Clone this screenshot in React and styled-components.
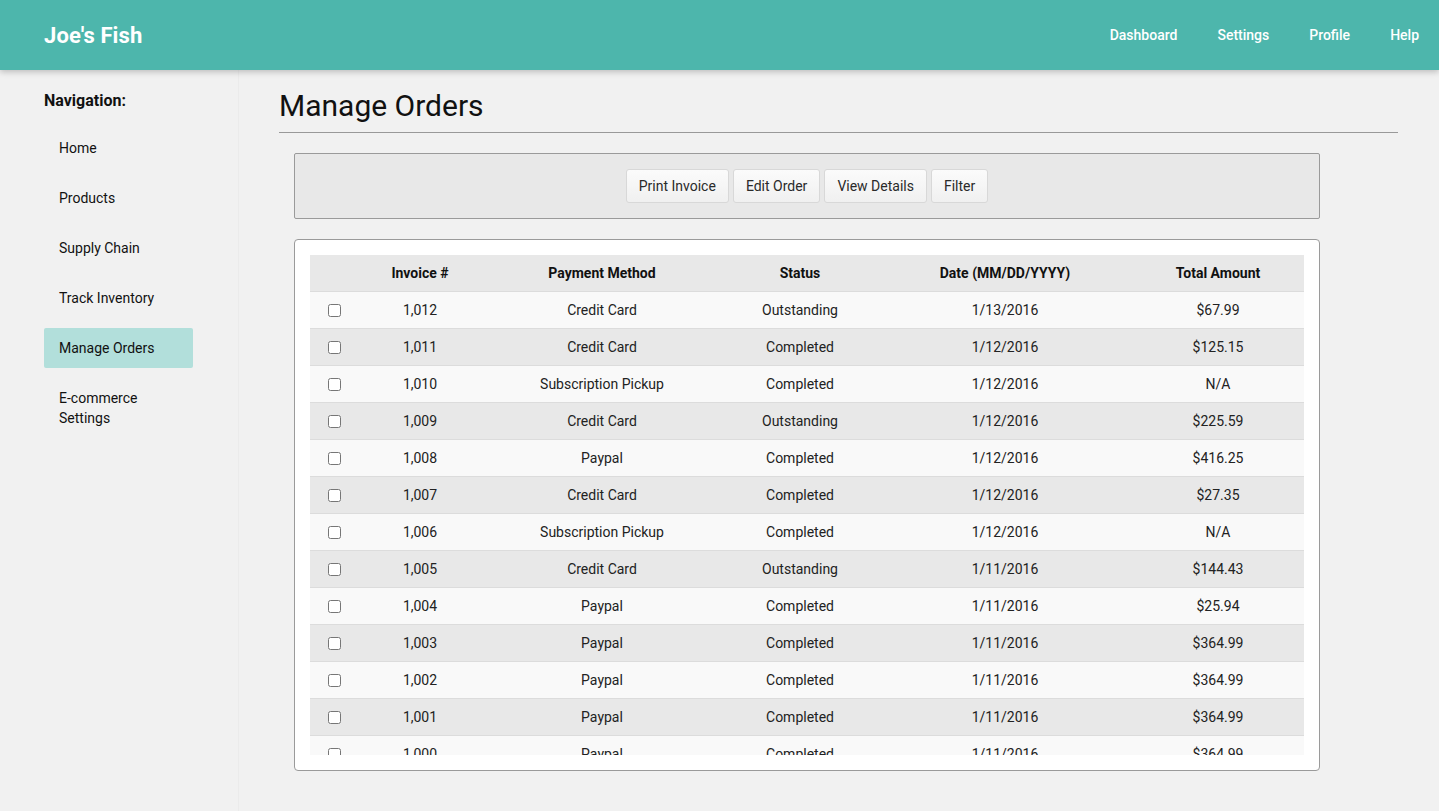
import React, { useState } from 'react';
import styled, { createGlobalStyle } from 'styled-components';

const GlobalStyle = createGlobalStyle`
  html, body {
    margin: 0;
    padding: 0;
    height: 100%;
    overflow: hidden;
  }
  body {
    font-family: Roboto, 'Liberation Sans', Arial, sans-serif;
    background: #f1f1f1;
    color: #222;
  }
  * {
    box-sizing: border-box;
  }
`;

const Page = styled.div`
  height: 100vh;
  display: flex;
  flex-direction: column;
`;

const Header = styled.header`
  height: 70px;
  flex: 0 0 70px;
  background: #4db6ac;
  display: flex;
  align-items: center;
  justify-content: space-between;
  padding-left: 44px;
  box-shadow: 0 2px 6px rgba(0, 0, 0, 0.22);
  position: relative;
  z-index: 2;
`;

const Logo = styled.div`
  color: #fff;
  font-size: 22px;
  font-weight: 700;
  letter-spacing: 0.1px;
`;

const TopNav = styled.nav`
  display: flex;
  align-items: center;
`;

const TopLink = styled.a`
  color: #fff;
  font-size: 14px;
  font-weight: 500;
  padding: 0 20px;
  text-decoration: none;
  cursor: pointer;
`;

const Body = styled.div`
  flex: 1;
  display: flex;
  min-height: 0;
`;

const Sidebar = styled.aside`
  width: 239px;
  flex: 0 0 239px;
  border-right: 1px solid #ebebeb;
  padding: 21px 0 0 44px;
`;

const SideTitle = styled.div`
  font-size: 16px;
  font-weight: 700;
  line-height: 20px;
  color: #111;
  margin-bottom: 17px;
`;

const SideList = styled.ul`
  list-style: none;
  margin: 0;
  padding: 0;
  display: flex;
  flex-direction: column;
  gap: 10px;
`;

const SideItem = styled.li`
  width: 149px;
  padding: 10px 15px;
  font-size: 14px;
  line-height: 20px;
  color: #111;
  border-radius: 2px;
  cursor: pointer;
  background: ${p => (p.$active ? '#b2dfdb' : 'transparent')};
`;

const Main = styled.main`
  flex: 1;
  padding: 18px 41px 0 40px;
  min-width: 0;
`;

const Title = styled.h1`
  margin: 0;
  font-size: 30px;
  font-weight: 400;
  line-height: 36px;
  color: #111;
  padding-bottom: 8px;
  border-bottom: 1px solid #999;
`;

const Toolbar = styled.div`
  margin: 20px 78px 0 15px;
  background: #e8e8e8;
  border: 1px solid #9a9a9a;
  border-radius: 2px;
  padding: 15px;
  display: flex;
  justify-content: center;
  gap: 4px;
`;

const ToolButton = styled.button`
  height: 34px;
  padding: 0 12px;
  font-family: inherit;
  font-size: 14px;
  color: #2a2a2a;
  background: linear-gradient(#fbfbfb, #f0f0f0);
  border: 1px solid #d8d8d8;
  border-radius: 3px;
  cursor: pointer;
`;

const Card = styled.div`
  margin: 20px 78px 0 15px;
  background: #fff;
  border: 1px solid #9a9a9a;
  border-radius: 4px;
  padding: 15px;
`;

const Scroller = styled.div`
  height: 500px;
  overflow: hidden;
`;

const Table = styled.table`
  width: 100%;
  border-collapse: collapse;
  table-layout: fixed;
  font-size: 14px;
  color: #222;
`;

const Col = styled.col`
  width: ${p => p.$w}px;
`;

const HeadCell = styled.th`
  height: 36px;
  background: #e8e8e8;
  font-weight: 700;
  color: #111;
  text-align: center;
  border-bottom: 1px solid #dcdcdc;
  padding: 0;
`;

const Row = styled.tr`
  background: ${p => (p.$odd ? '#e8e8e8' : '#f9f9f9')};
`;

const Cell = styled.td`
  height: 37px;
  text-align: center;
  padding: 0;
  border-bottom: 1px solid #dcdcdc;
`;

const Check = styled.input`
  width: 13px;
  height: 13px;
  margin: 0;
  vertical-align: middle;
`;

const navItems = ['Home', 'Products', 'Supply Chain', 'Track Inventory', 'Manage Orders', 'E-commerce Settings'];

const orders = [
  ['1,012', 'Credit Card', 'Outstanding', '1/13/2016', '$67.99'],
  ['1,011', 'Credit Card', 'Completed', '1/12/2016', '$125.15'],
  ['1,010', 'Subscription Pickup', 'Completed', '1/12/2016', 'N/A'],
  ['1,009', 'Credit Card', 'Outstanding', '1/12/2016', '$225.59'],
  ['1,008', 'Paypal', 'Completed', '1/12/2016', '$416.25'],
  ['1,007', 'Credit Card', 'Completed', '1/12/2016', '$27.35'],
  ['1,006', 'Subscription Pickup', 'Completed', '1/12/2016', 'N/A'],
  ['1,005', 'Credit Card', 'Outstanding', '1/11/2016', '$144.43'],
  ['1,004', 'Paypal', 'Completed', '1/11/2016', '$25.94'],
  ['1,003', 'Paypal', 'Completed', '1/11/2016', '$364.99'],
  ['1,002', 'Paypal', 'Completed', '1/11/2016', '$364.99'],
  ['1,001', 'Paypal', 'Completed', '1/11/2016', '$364.99'],
  ['1,000', 'Paypal', 'Completed', '1/11/2016', '$364.99'],
  ['999', 'Credit Card', 'Completed', '1/10/2016', '$88.20'],
];

const widths = [48, 124, 240, 156, 254, 172];

const App = () => {
  const [active, setActive] = useState('Manage Orders');

  return (
    <>
      <GlobalStyle />
      <Page>
        <Header>
          <Logo>Joe's Fish</Logo>
          <TopNav>
            <TopLink>Dashboard</TopLink>
            <TopLink>Settings</TopLink>
            <TopLink>Profile</TopLink>
            <TopLink>Help</TopLink>
          </TopNav>
        </Header>
        <Body>
          <Sidebar>
            <SideTitle>Navigation:</SideTitle>
            <SideList>
              {navItems.map(item => (
                <SideItem key={item} $active={item === active} onClick={() => setActive(item)}>
                  {item}
                </SideItem>
              ))}
            </SideList>
          </Sidebar>
          <Main>
            <Title>Manage Orders</Title>
            <Toolbar>
              <ToolButton>Print Invoice</ToolButton>
              <ToolButton>Edit Order</ToolButton>
              <ToolButton>View Details</ToolButton>
              <ToolButton>Filter</ToolButton>
            </Toolbar>
            <Card>
              <Scroller>
                <Table>
                  <colgroup>
                    {widths.map((w, i) => <Col key={i} $w={w} />)}
                  </colgroup>
                  <thead>
                    <tr>
                      <HeadCell />
                      <HeadCell>Invoice #</HeadCell>
                      <HeadCell>Payment Method</HeadCell>
                      <HeadCell>Status</HeadCell>
                      <HeadCell>Date (MM/DD/YYYY)</HeadCell>
                      <HeadCell>Total Amount</HeadCell>
                    </tr>
                  </thead>
                  <tbody>
                    {orders.map((o, i) => (
                      <Row key={o[0]} $odd={i % 2 === 1}>
                        <Cell><Check type="checkbox" /></Cell>
                        {o.map((v, j) => <Cell key={j}>{v}</Cell>)}
                      </Row>
                    ))}
                  </tbody>
                </Table>
              </Scroller>
            </Card>
          </Main>
        </Body>
      </Page>
    </>
  );
};

export default App;
